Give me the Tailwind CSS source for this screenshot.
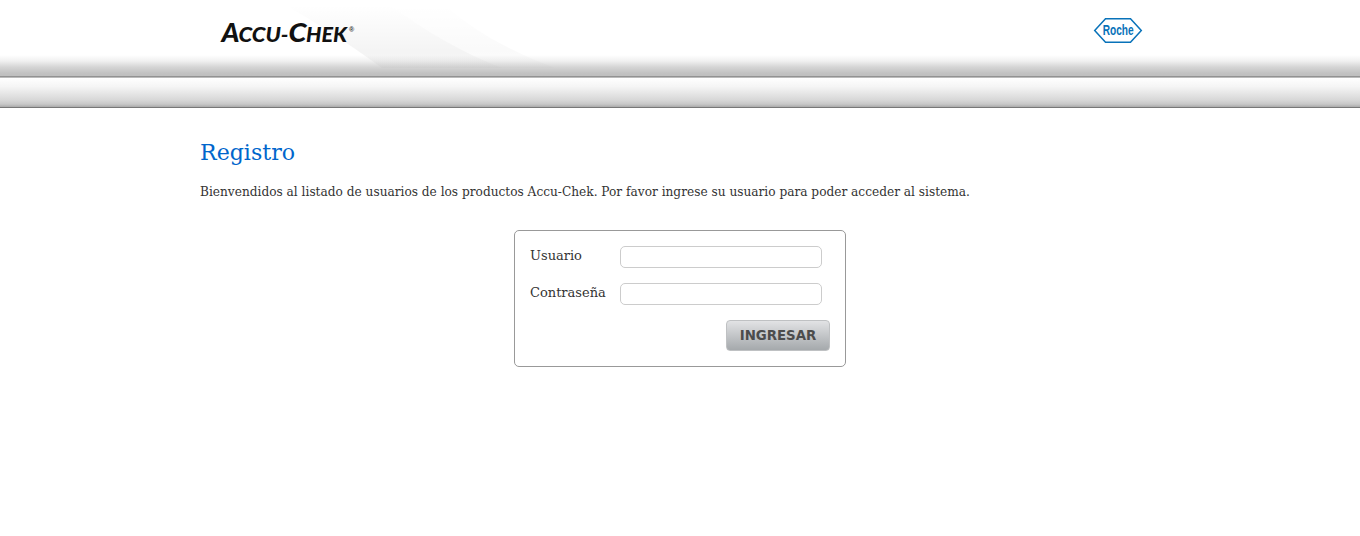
<!DOCTYPE html>
<html lang="es"><head><meta charset="utf-8"><title>Registro</title>
<script src="https://cdn.jsdelivr.net/npm/@tailwindcss/browser@4"></script></head>
<body class="bg-white text-[#333] font-['DejaVu_Serif',serif] h-[536px] overflow-hidden">
<header class="h-[78px] border-b border-[#bbb] bg-[linear-gradient(#fff_0,#fff_55px,#f0f0f0_61px,#d5d5d5_67px,#c2c2c2_73px,#bebebe_76px,#929292_76px,#929292_77px)]">
<div class="w-[960px] mx-auto flex justify-between">
<svg class="w-[360px] h-[70px] shrink-0" viewBox="0 0 360 70" role="img" aria-label="Accu-Chek">
<defs><linearGradient id="a" x2="0" y2="1"><stop offset="0" stop-color="#000" stop-opacity="0"/><stop offset=".75" stop-color="#000" stop-opacity=".045"/><stop offset="1" stop-color="#000" stop-opacity=".02"/></linearGradient>
<linearGradient id="b" x2="0" y2="1"><stop offset="0" stop-color="#000" stop-opacity="0"/><stop offset=".7" stop-color="#000" stop-opacity=".02"/><stop offset="1" stop-color="#000" stop-opacity=".01"/></linearGradient></defs>
<path d="M85 5H190Q245 46 302 68H182Q130 30 85 5Z" fill="url(#a)"/>
<path d="M190 5H245Q285 42 355 68H302Q245 46 190 5Z" fill="url(#b)"/>
<g font-family="Lato, sans-serif" font-weight="900" font-style="italic" fill="#111"><text x="21.500" y="42" font-size="26" textLength="18" lengthAdjust="spacingAndGlyphs">A</text><text x="38.500" y="42" font-size="21.500" textLength="50" lengthAdjust="spacingAndGlyphs">CCU-</text><text x="88.500" y="42" font-size="26" textLength="18" lengthAdjust="spacingAndGlyphs">C</text><text x="106" y="42" font-size="21.500" textLength="41" lengthAdjust="spacingAndGlyphs">HEK</text></g>
<text x="149" y="31.500" font-family="Liberation Sans, sans-serif" font-weight="700" font-size="7" fill="#333">®</text>
</svg>
<svg class="w-[50px] h-[28px] mt-[17px] mr-[17px]" viewBox="0 0 50 28"><path d="M1.700 13.500L12.500 1.700H37.500L48.300 13.500L37.500 25.300H12.500Z" fill="#fff" stroke="#0872b9" stroke-width="1.500"/><text transform="translate(9.700 18) scale(.7 1)" font-family="Liberation Sans, sans-serif" font-weight="700" font-size="14.500" fill="#0872b9">Roche</text></svg>
</div></header>
<nav class="h-[30px] border-b border-[#777] bg-[linear-gradient(#fff,#f5f5f5_30%,#d8d8d8_75%,#c8c8c8_90%,#aaa)]"></nav>
<main class="w-[960px] mx-auto pt-[29px]">
<h1 class="text-[22.100px] leading-[30px] text-[#0066cc]">Registro</h1>
<p class="text-[12.160px] leading-[18px] mt-[16px]">Bienvendidos al listado de usuarios de los productos Accu-Chek. Por favor ingrese su usuario para poder acceder al sistema.</p>
<form class="w-[332px] h-[137px] mx-auto mt-[29px] border border-[#999] rounded-[5px] p-[15px] text-[13px]">
<div class="flex h-[22px] mb-[15px]"><label for="u" class="w-[90px] leading-[20px]">Usuario</label><input id="u" class="w-[202px] h-[22px] border border-[#ccc] rounded-[5px] px-1"></div>
<div class="flex h-[22px] mb-[15px]"><label for="p" class="w-[90px] leading-[20px]">Contraseña</label><input id="p" type="password" class="w-[202px] h-[22px] border border-[#ccc] rounded-[5px] px-1"></div>
<div class="flex justify-end"><button type="button" class="w-[104px] h-[31px] border border-[#bfc1c3] rounded-[4px] bg-linear-to-b from-[#e2e3e5] to-[#a5a9ac] font-['DejaVu_Sans',sans-serif] font-bold text-[13.333px] text-[#4c4c4c]">INGRESAR</button></div>
</form></main></body></html>
